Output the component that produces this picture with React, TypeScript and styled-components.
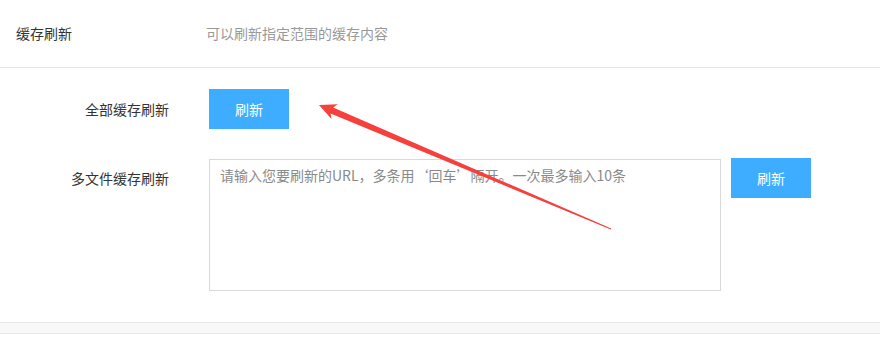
import React from "react";
import styled, { createGlobalStyle } from "styled-components";

const GlobalStyle = createGlobalStyle`
  html, body {
    margin: 0;
    padding: 0;
    background: #fff;
  }
  body {
    font-family: "Noto Sans CJK SC", "Liberation Sans", sans-serif;
    color: #333;
  }
`;

export default function App() {
  return (
    <Page>
      <GlobalStyle />
      <Header>
        <HeaderTitle>缓存刷新</HeaderTitle>
        <HeaderDesc>可以刷新指定范围的缓存内容</HeaderDesc>
      </Header>
      <Form>
        <Row>
          <Label>全部缓存刷新</Label>
          <Button>刷新</Button>
        </Row>
        <Row>
          <Label>多文件缓存刷新</Label>
          <TextArea placeholder="请输入您要刷新的URL，多条用‘回车’隔开。一次最多输入10条" />
          <Button $gap={10}>刷新</Button>
        </Row>
      </Form>
      <Footer />
      <Arrow width="880" height="342" viewBox="0 0 880 342">
        <polygon
          points="319,105 337.8,104.3 333.1,107.5 611.2,228.5 610.8,229.6 330.6,113.4 331.5,119"
          fill="#f5403c"
        />
      </Arrow>
    </Page>
  );
}

const Page = styled.div`
  position: relative;
  width: 880px;
  height: 342px;
  overflow: hidden;
`;

const Header = styled.div`
  display: flex;
  align-items: center;
  height: 66px;
  padding: 0 16px 1px;
  border-bottom: 1px solid #e5e5e5;
  font-size: 14px;
  line-height: 20px;
`;

const HeaderTitle = styled.div`
  width: 190px;
  color: #333;
`;

const HeaderDesc = styled.div`
  color: #999;
`;

const Form = styled.div`
  display: flex;
  flex-direction: column;
  gap: 29px;
  padding: 21px 0 31px;
`;

const Row = styled.div`
  display: flex;
  align-items: flex-start;
`;

const Label = styled.div`
  width: 169px;
  margin-right: 40px;
  text-align: right;
  line-height: 40px;
  font-size: 14px;
  color: #333;
`;

const Button = styled.button<{ $gap?: number }>`
  width: 80px;
  height: 40px;
  margin-left: ${(p) => p.$gap ?? 0}px;
  border: none;
  background: #3eadff;
  color: #fff;
  font-family: inherit;
  font-size: 14px;
  cursor: pointer;
`;

const TextArea = styled.textarea`
  box-sizing: border-box;
  width: 512px;
  height: 132px;
  margin-top: 1px;
  padding: 5px 10px;
  border: 1px solid #d9d9d9;
  resize: none;
  outline: none;
  font-family: inherit;
  font-size: 14px;
  line-height: 20px;
  color: #333;

  &::placeholder {
    color: #8a8a8a;
  }
`;

const Footer = styled.div`
  height: 10px;
  background: #f8f8f8;
  border-top: 1px solid #e8e8e8;
  border-bottom: 1px solid #e8e8e8;
`;

const Arrow = styled.svg`
  position: absolute;
  left: 0;
  top: 0;
  pointer-events: none;
`;
